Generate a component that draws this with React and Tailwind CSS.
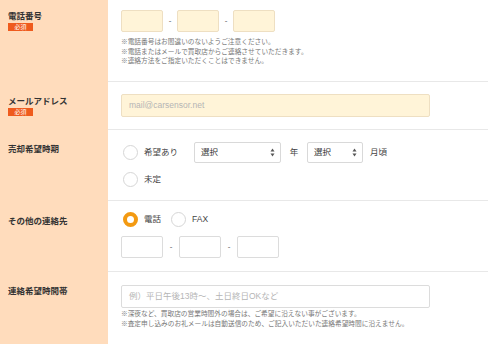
const FONT = "font-['Liberation_Sans','Noto_Sans_CJK_JP',sans-serif]";

function Badge() {
  return (
    <div className="mt-[2px] flex h-[8px] w-[25px] items-center justify-center bg-[#ef5b1d] text-[6px] leading-none text-white">
      必須
    </div>
  );
}

function Label({ text, required, pt }) {
  return (
    <div className={`w-[108px] shrink-0 bg-[#ffdcbc] pl-[8px] ${pt}`}>
      <div className="text-[8.5px] font-bold leading-[10px] text-[#333]">{text}</div>
      {required && <Badge />}
    </div>
  );
}

function Radio({ checked }) {
  return checked ? (
    <span className="block h-[15px] w-[15px] shrink-0 rounded-full border-[4px] border-[#f39a12] bg-white" />
  ) : (
    <span className="block h-[15px] w-[15px] shrink-0 rounded-full border border-[#d6d6d6] bg-white" />
  );
}

function Select({ w }) {
  return (
    <div className={`flex h-[21px] ${w} items-center justify-between rounded-[2px] border border-[#d9d9d9] bg-white pl-[6px] pr-[5px]`}>
      <span className="text-[8.5px] text-[#333]">選択</span>
      <svg width="5" height="9" viewBox="0 0 5 9" className="text-[#555]">
        <path d="M2.5 0.5 L4.5 3.5 L0.5 3.5 Z" fill="currentColor" />
        <path d="M2.5 8.5 L4.5 5.5 L0.5 5.5 Z" fill="currentColor" />
      </svg>
    </div>
  );
}

function Notes({ lines, mt }) {
  return (
    <div className={`${mt} text-[6.7px] leading-[9.5px] text-[#777]`}>
      {lines.map((l) => (
        <div key={l}>{l}</div>
      ))}
    </div>
  );
}

function TelInputs({ filled, gap }) {
  const cls = filled
    ? "h-[22px] w-[42px] rounded-[2px] border border-[#eedfc2] bg-[#fff4d8]"
    : "h-[22px] w-[42px] rounded-[2px] border border-[#dcdcdc] bg-white";
  return (
    <div className="flex items-center">
      <div className={cls} />
      <span className={`${gap} text-center text-[8px] text-[#555]`}>-</span>
      <div className={cls} />
      <span className={`${gap} text-center text-[8px] text-[#555]`}>-</span>
      <div className={cls} />
    </div>
  );
}

export default function App() {
  return (
    <div className={`h-[344px] w-[488px] overflow-hidden bg-white ${FONT}`}>
      {/* 電話番号 */}
      <div className="flex h-[82px]">
        <Label text="電話番号" required pt="pt-[11px]" />
        <div className="flex-1 border-b border-[#e8e8e8] pl-[13px] pt-[10px]">
          <TelInputs filled gap="w-[14px]" />
          <Notes
            mt="mt-[5px]"
            lines={[
              "※電話番号はお間違いのないようご注意ください。",
              "※電話またはメールで買取店からご連絡させていただきます。",
              "※連絡方法をご指定いただくことはできません。",
            ]}
          />
        </div>
      </div>

      {/* メールアドレス */}
      <div className="flex h-[48px]">
        <Label text="メールアドレス" required pt="pt-[14px]" />
        <div className="flex-1 border-b border-[#e8e8e8] pl-[13px] pt-[12px]">
          <div className="flex h-[23px] w-[309px] items-center rounded-[2px] border border-[#eedfc2] bg-[#fff4d8] pl-[7px] text-[8.5px] text-[#b5b5b5]">
            mail@carsensor.net
          </div>
        </div>
      </div>

      {/* 売却希望時期 */}
      <div className="flex h-[71px]">
        <Label text="売却希望時期" pt="pt-[14px]" />
        <div className="flex-1 border-b border-[#e8e8e8] pl-[15px] pt-[12px]">
          <div className="flex items-center text-[8.5px] text-[#444]">
            <Radio />
            <span className="ml-[6px] w-[50px]">希望あり</span>
            <Select w="w-[87px]" />
            <span className="w-[26px] text-center">年</span>
            <Select w="w-[56px]" />
            <span className="ml-[7px]">月頃</span>
          </div>
          <div className="mt-[9px] flex items-center text-[8.5px] text-[#444]">
            <Radio />
            <span className="ml-[6px]">未定</span>
          </div>
        </div>
      </div>

      {/* その他の連絡先 */}
      <div className="flex h-[71px]">
        <Label text="その他の連絡先" pt="pt-[15px]" />
        <div className="flex-1 border-b border-[#e8e8e8] pl-[13px] pt-[11px]">
          <div className="flex items-center pl-[2px] text-[8.5px] text-[#444]">
            <Radio checked />
            <span className="ml-[6px] w-[27px]">電話</span>
            <Radio />
            <span className="ml-[6px]">FAX</span>
          </div>
          <div className="mt-[9px]">
            <TelInputs gap="w-[16px]" />
          </div>
        </div>
      </div>

      {/* 連絡希望時間帯 */}
      <div className="flex flex-1">
        <Label text="連絡希望時間帯" pt="pt-[14px]" />
        <div className="h-[72px] flex-1 pl-[13px] pt-[13px]">
          <div className="flex h-[23px] w-[309px] items-center rounded-[2px] border border-[#dcdcdc] bg-white pl-[7px] text-[8.5px] text-[#b5b5b5]">
            例）平日午後13時〜、土日終日OKなど
          </div>
          <Notes
            mt="mt-[1px]"
            lines={[
              "※深夜など、買取店の営業時間外の場合は、ご希望に沿えない事がございます。",
              "※査定申し込みのお礼メールは自動送信のため、ご記入いただいた連絡希望時間に沿えません。",
            ]}
          />
        </div>
      </div>
    </div>
  );
}
